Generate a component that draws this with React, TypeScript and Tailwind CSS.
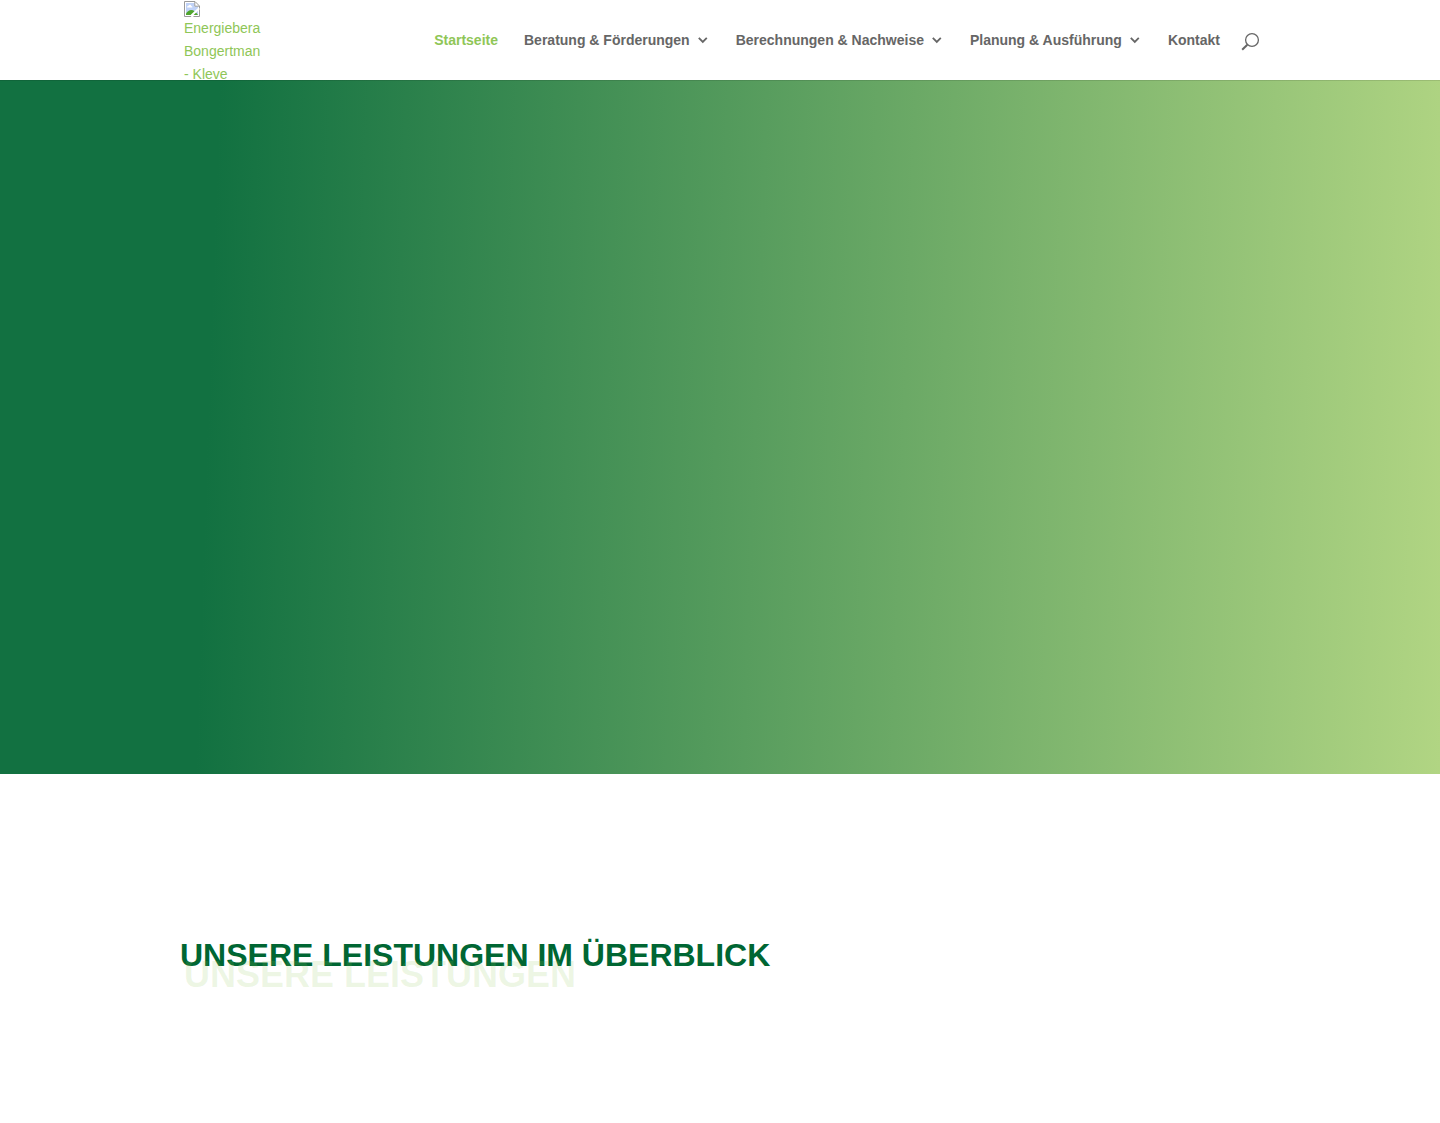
import React from "react";

const navItems = [
  { label: "Startseite", active: true, hasMenu: false },
  { label: "Beratung & Förderungen", active: false, hasMenu: true },
  { label: "Berechnungen & Nachweise", active: false, hasMenu: true },
  { label: "Planung & Ausführung", active: false, hasMenu: true },
  { label: "Kontakt", active: false, hasMenu: false },
];

function ChevronIcon() {
  return (
    <svg className="ml-2 h-3 w-3" viewBox="0 0 12 12" fill="none" aria-hidden="true">
      <path d="M.8 3.900 4.800 8l4-4.100" stroke="currentColor" strokeWidth="1.800" />
    </svg>
  );
}

function SearchIcon() {
  return (
    <svg className="h-5 w-5" viewBox="0 0 20 20" fill="none" aria-hidden="true">
      <circle cx="12" cy="8" r="6.4" stroke="currentColor" strokeWidth="1.300" />
      <path d="M7.3 12.7 2.2 17.8" stroke="currentColor" strokeWidth="2" />
    </svg>
  );
}

// placeholder for the logo
function ImageIcon() {
  return (
    <svg className="block h-4 w-4" viewBox="0 0 16 16" fill="none" aria-hidden="true">
      <path d="M.5.5h10.500l4.500 4.500v10.500H.5z" fill="#fff" stroke="#9a9a9a" />
      <path d="M2 2h8.500v3.500H14V14H2z" fill="#c0d2f7" />
      <path d="M3 6.500c0-1.300.8-1.800 1.500-1.800.5-1.300 2.500-1.200 2.800.2.900 0 1.200.9 1 1.600z" fill="#fff" />
      <path d="M2 14v-1.500c1.500-2.300 3.300-3.500 5.200-3.500 2.600 0 4.800 2 6.800 5z" fill="#4fa52c" />
      <path d="M10.800 1v4.200H15" stroke="#9a9a9a" />
      <path d="M15.200 7.200 7.500 14.500" stroke="#fff" strokeWidth="2.200" />
      <path d="M7.500 16l2-2" stroke="#fff" strokeWidth="2" />
    </svg>
  );
}

export default function App() {
  return (
    <div className="min-h-screen bg-white font-['Liberation_Sans',Arial,sans-serif] text-sm text-[#666666]">
      <header className="relative z-10 h-20 bg-white shadow-[0_1px_0_rgba(0,0,0,0.1)]">
        <div className="mx-auto flex h-full w-4/5 max-w-[1080px] justify-between">
          <a href="#" className="ml-1 pt-px leading-[23px] whitespace-nowrap text-[#8fc657]">
            <ImageIcon />
            Energiebera
            <br />
            Bongertman
            <br />- Kleve
          </a>

          <div className="flex items-center">
            <nav>
              <ul className="flex items-center gap-[26px] font-bold">
                {navItems.map((item) => (
                  <li key={item.label}>
                    <a
                      href="#"
                      className={
                        item.active
                          ? "flex items-center whitespace-nowrap text-[#8fc657]"
                          : "flex items-center whitespace-nowrap"
                      }
                    >
                      {item.label}
                      {item.hasMenu && <ChevronIcon />}
                    </a>
                  </li>
                ))}
              </ul>
            </nav>
            <button type="button" aria-label="Suche" className="ml-5 pt-1">
              <SearchIcon />
            </button>
          </div>
        </div>
      </header>

      <main>
        <section className="h-[694px] bg-[linear-gradient(92deg,#127141_15%,#b1d583_100%)]" />

        <section className="mx-auto w-4/5 max-w-[1080px] py-40 font-bold uppercase">
          <h2 className="text-[32px] leading-[42px] text-[#006633]">
            Unsere Leistungen im Überblick
          </h2>
          {/* pale title tucked under the heading */}
          <p className="relative -mt-6 ml-1 text-4xl leading-[46px] text-[#8fc657]/17">
            Unsere Leistungen
          </p>
        </section>
      </main>
    </div>
  );
}
